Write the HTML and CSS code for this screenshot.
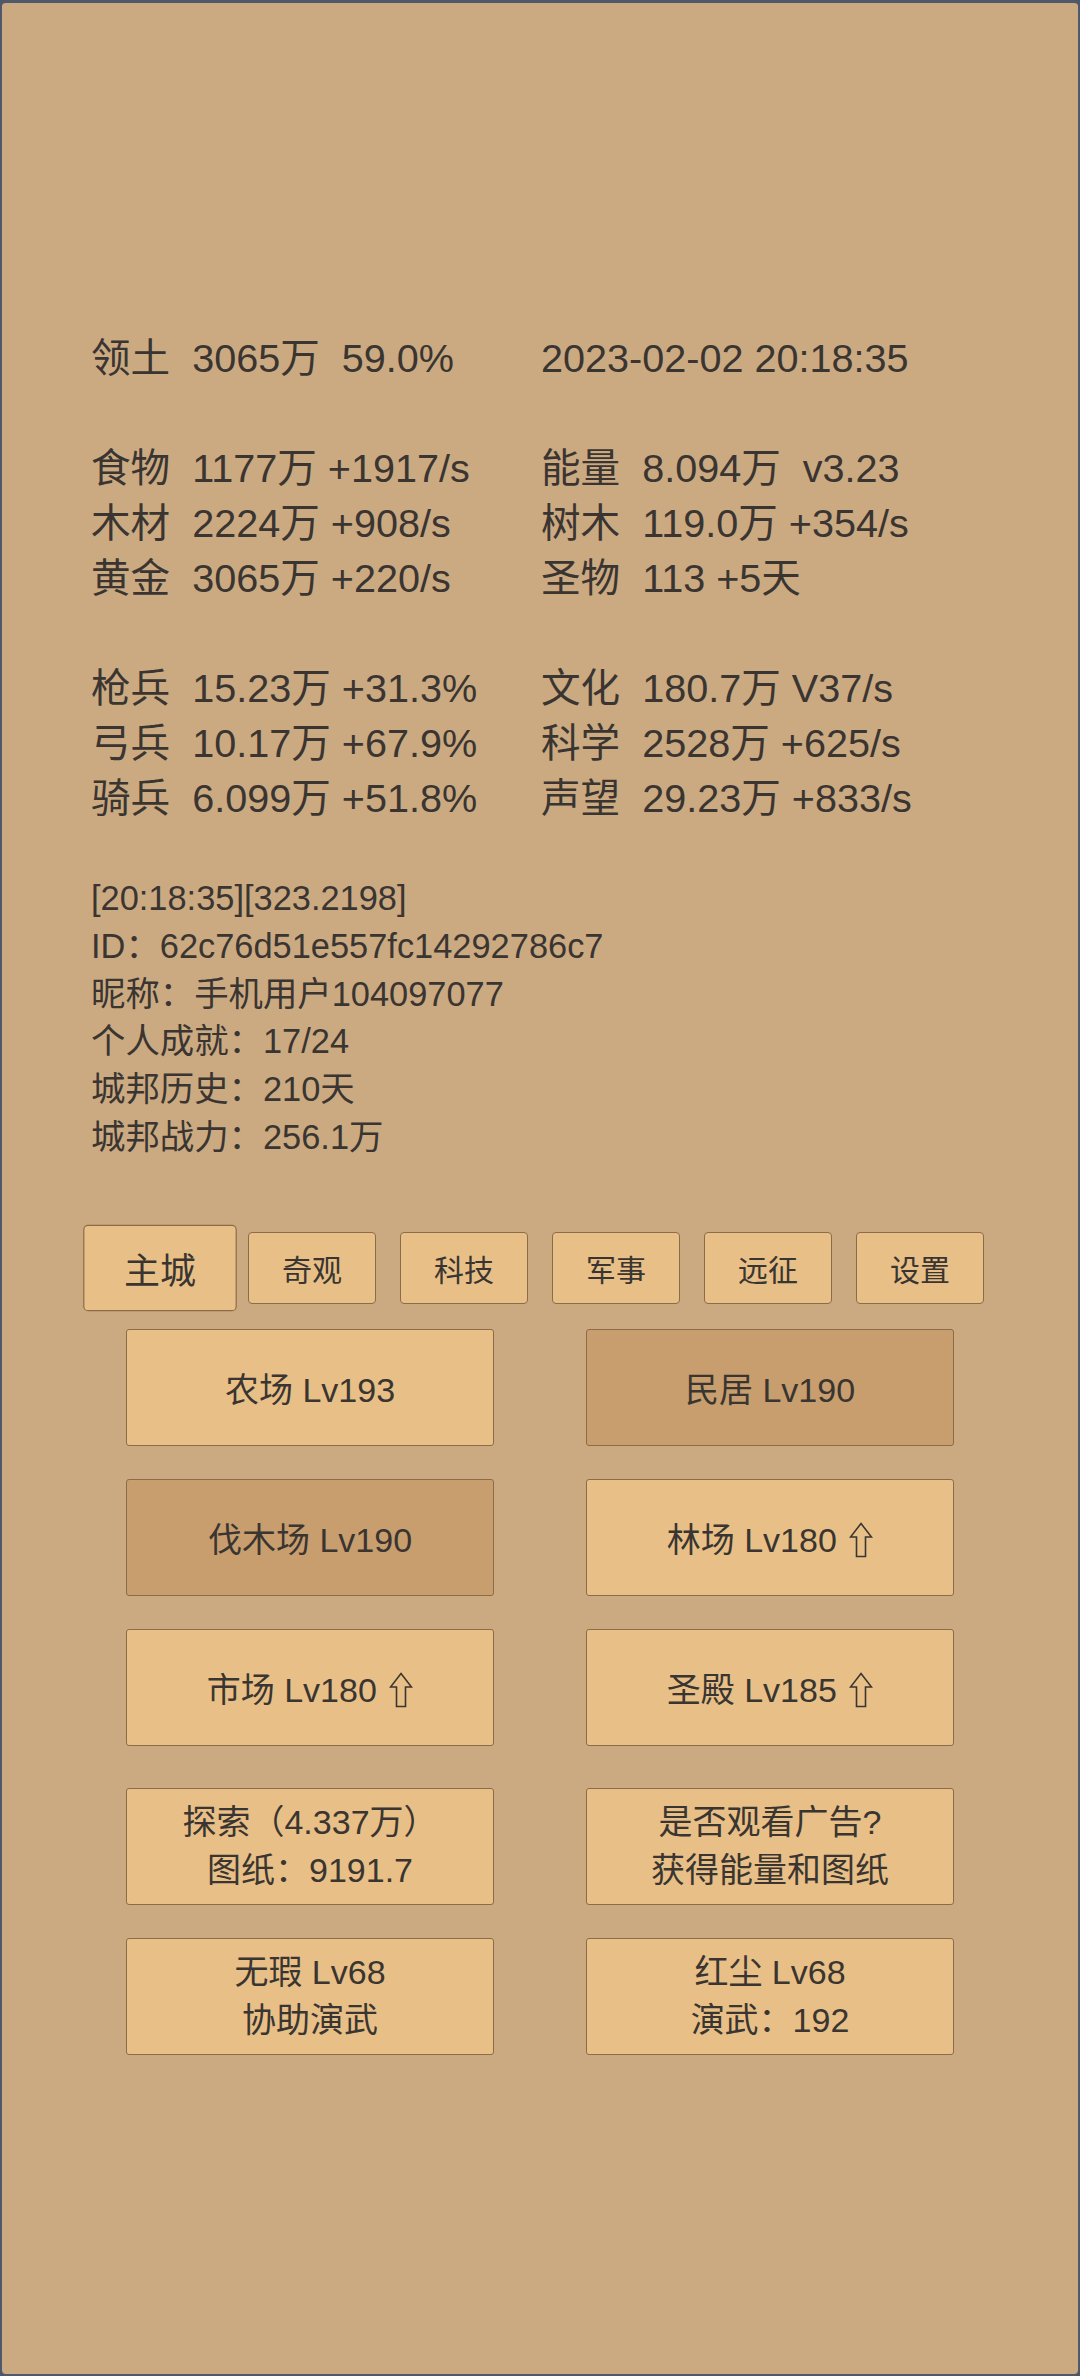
FILE: index.html
```html
<!DOCTYPE html>
<html lang="zh-CN">
<head>
  <meta charset="UTF-8" />
  <meta name="viewport" content="width=device-width, initial-scale=1" />
  <title>城邦</title>
  <link rel="stylesheet" href="styles.css">
</head>
<body>
  <div class="screen">
    <div class="stats">
      <div class="line"><span>领土  3065万  59.0%</span><span>2023-02-02 20:18:35</span></div>
      <div class="line"></div>
      <div class="line"><span>食物  1177万 +1917/s</span><span>能量  8.094万  v3.23</span></div>
      <div class="line"><span>木材  2224万 +908/s</span><span>树木  119.0万 +354/s</span></div>
      <div class="line"><span>黄金  3065万 +220/s</span><span>圣物  113 +5天</span></div>
      <div class="line"></div>
      <div class="line"><span>枪兵  15.23万 +31.3%</span><span>文化  180.7万 V37/s</span></div>
      <div class="line"><span>弓兵  10.17万 +67.9%</span><span>科学  2528万 +625/s</span></div>
      <div class="line"><span>骑兵  6.099万 +51.8%</span><span>声望  29.23万 +833/s</span></div>
    </div>

    <div class="info">
      <div>[20:18:35][323.2198]</div>
      <div>ID：62c76d51e557fc14292786c7</div>
      <div>昵称：手机用户104097077</div>
      <div>个人成就：17/24</div>
      <div>城邦历史：210天</div>
      <div>城邦战力：256.1万</div>
    </div>

    <div class="tabs">
      <button class="tab active">主城</button>
      <button class="tab">奇观</button>
      <button class="tab">科技</button>
      <button class="tab">军事</button>
      <button class="tab">远征</button>
      <button class="tab">设置</button>
    </div>

    <div class="buildings">
      <button class="btn">农场 Lv193</button>
      <button class="btn busy">民居 Lv190</button>
      <button class="btn busy">伐木场 Lv190</button>
      <button class="btn">林场 Lv180 <svg class="up" viewBox="0 0 24 36"><path d="M12 1.5L22.5 15H16.5V34.5H7.5V15H1.5Z"/></svg></button>
      <button class="btn">市场 Lv180 <svg class="up" viewBox="0 0 24 36"><path d="M12 1.5L22.5 15H16.5V34.5H7.5V15H1.5Z"/></svg></button>
      <button class="btn">圣殿 Lv185 <svg class="up" viewBox="0 0 24 36"><path d="M12 1.5L22.5 15H16.5V34.5H7.5V15H1.5Z"/></svg></button>
    </div>

    <div class="buildings extra">
      <button class="btn two">探索（4.337万）<br>图纸：9191.7</button>
      <button class="btn two">是否观看广告?<br>获得能量和图纸</button>
      <button class="btn two">无瑕 Lv68<br>协助演武</button>
      <button class="btn two">红尘 Lv68<br>演武：192</button>
    </div>
  </div>
</body>
</html>
```

FILE: styles.css
```css
body {
  margin: 0;
  background: #4d5767;
  font-family: "Liberation Sans", "Noto Sans CJK SC", sans-serif;
  color: #3a3531;
}
.screen {
  box-sizing: border-box;
  height: 2376px;
  background: #cbaa82;
  border: 2px solid #4f596a;
  border-top-width: 3px;
  border-radius: 6px;
  overflow: hidden;
}
.stats {
  padding: 328px 0 0 89px;
  font-size: 39.6px;
}
.line {
  display: grid;
  grid-template-columns: 450px auto;
  height: 55px;
  line-height: 55px;
  white-space: pre;
}
.info {
  margin-top: 49px;
  padding-left: 89px;
  font-size: 34.4px;
  line-height: 47.8px;
}
.tabs {
  display: flex;
  justify-content: center;
  gap: 24px;
  margin-top: 70px;
}
button {
  font-family: inherit;
  color: inherit;
  background: #e8c087;
  border: 1px solid #8c6c48;
  padding: 0;
  cursor: pointer;
}
.tab {
  width: 128px;
  height: 72px;
  border-radius: 4px;
  font-size: 30px;
}
.tab.active {
  transform: scale(1.2);
}
.buildings {
  display: grid;
  grid-template-columns: 368px 368px;
  justify-content: center;
  column-gap: 92px;
  row-gap: 33px;
  margin-top: 25px;
}
.buildings.extra {
  margin-top: 42px;
}
.btn {
  height: 117px;
  border-radius: 3px;
  font-size: 34px;
}
.btn.busy {
  background: #c89e6e;
}
.btn.two {
  line-height: 48px;
}
.up {
  width: 24px;
  height: 36px;
  margin-left: 3px;
  vertical-align: -6px;
}
.up path {
  fill: none;
  stroke: #3a3531;
  stroke-width: 1.6;
  stroke-linejoin: miter;
}
```
